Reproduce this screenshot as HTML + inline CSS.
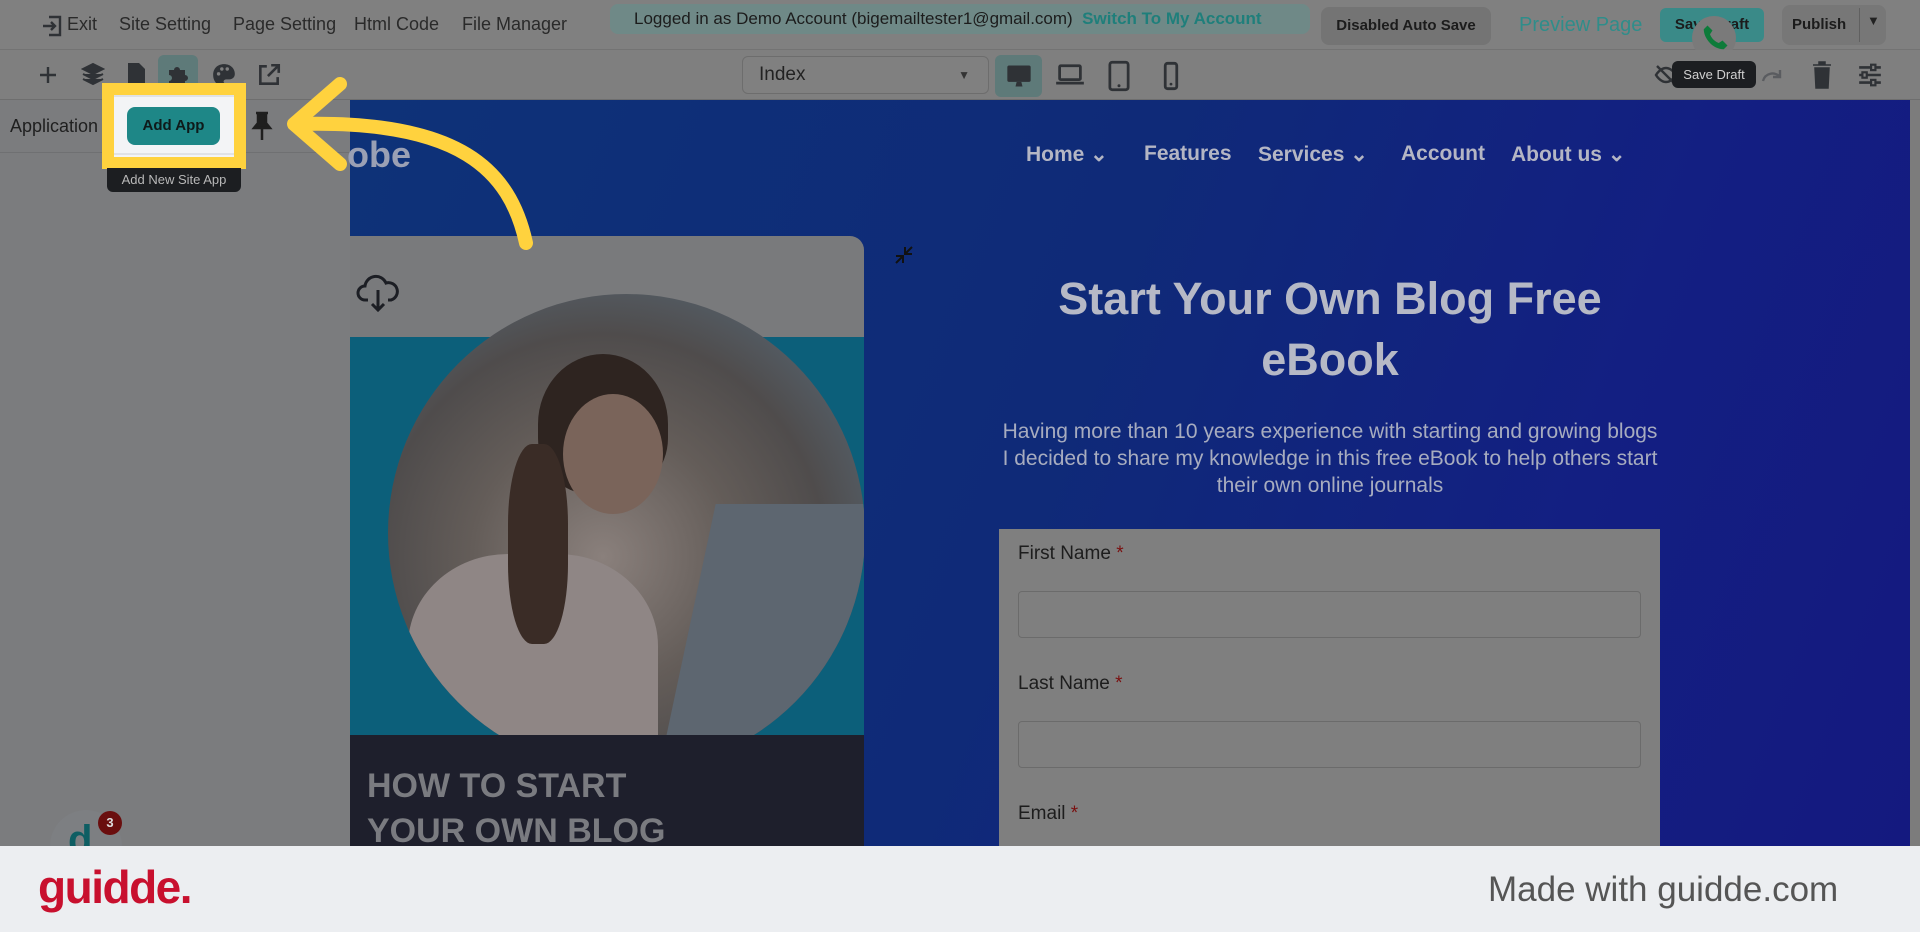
<!DOCTYPE html>
<html><head><meta charset="utf-8"><style>
*{margin:0;padding:0;box-sizing:border-box}
body{width:1920px;height:932px;overflow:hidden;background:#7f7f7f;font-family:"Liberation Sans",sans-serif;position:relative}
.a{position:absolute}
.tb{left:0;top:0;width:1920px;height:50px;background:#808080;border-bottom:1px solid #737373}
.tb2{left:0;top:50px;width:1920px;height:50px;background:#7f7f7f;border-bottom:1px solid #6e6e6e}
.t{font-size:18px;color:#2a2a2a;top:14px}
.ic{stroke:#2f3236;fill:none;stroke-width:2.4}
.nav{font-size:21px;font-weight:bold;color:#b4b6c4;top:142px}
</style></head><body>
<div class="a tb"></div>
<svg class="a" style="left:40px;top:14px" width="24" height="24" viewBox="0 0 24 24"><path d="M9 3h11v18H9M3 12h12M11 8l4 4-4 4" class="ic" stroke-width="2"/></svg>
<div class="a t" style="left:67px">Exit</div>
<div class="a t" style="left:119px">Site Setting</div>
<div class="a t" style="left:233px">Page Setting</div>
<div class="a t" style="left:354px">Html Code</div>
<div class="a t" style="left:462px">File Manager</div>
<div class="a" style="left:610px;top:4px;width:700px;height:30px;background:#6f8987;border-radius:8px;font-size:17px;line-height:30px;padding-left:24px;color:#1c1c1c">Logged in as Demo Account (bigemailtester1@gmail.com) &nbsp;<b style="color:#1f7f7b">Switch To My Account</b></div>
<div class="a" style="left:1321px;top:7px;width:170px;height:38px;background:#747474;border-radius:8px;font-size:15px;font-weight:bold;line-height:38px;text-align:center;color:#1c1c1c">Disabled Auto Save</div>
<div class="a" style="left:1519px;top:14px;font-size:20px;color:#2f8d8a">Preview Page</div>
<div class="a" style="left:1660px;top:8px;width:104px;height:34px;background:#3a8a88;border-radius:6px;font-size:15px;font-weight:bold;line-height:34px;text-align:center;color:#1c1c1c">Save Draft</div>
<div class="a" style="left:1692px;top:16px;width:44px;height:44px;border-radius:50%;background:#7a7a7a"></div>
<svg class="a" style="left:1700px;top:22px" width="30" height="32" viewBox="0 0 24 24"><path d="M6 2l4 4-2 3c1 3 4 6 7 7l3-2 4 4-3 3C10 21 3 12 3 5z" fill="#0d7b3a"/></svg>
<div class="a" style="left:1782px;top:5px;width:104px;height:40px;background:#777;border-radius:8px;font-size:15px;font-weight:bold;line-height:40px;padding-left:10px;color:#1c1c1c">Publish</div>
<div class="a" style="left:1859px;top:8px;width:1px;height:34px;background:#606060"></div>
<div class="a" style="left:1867px;top:13px;font-size:13px;color:#222">▼</div>

<div class="a tb2"></div>
<svg class="a" style="left:36px;top:63px" width="24" height="24" viewBox="0 0 24 24"><path d="M12 4v16M4 12h16" class="ic" stroke-width="2.6"/></svg>
<svg class="a" style="left:81px;top:62px" width="24" height="26" viewBox="0 0 24 26"><path d="M12 2l10 5-10 5-10-5z M2 12l10 5 10-5 M2 17l10 5 10-5" fill="#2f3236" stroke="#2f3236" stroke-width="2"/></svg>
<svg class="a" style="left:126px;top:62px" width="20" height="26" viewBox="0 0 20 26"><path d="M2 1h11l6 6v18H2z" fill="#2f3236"/></svg>
<div class="a" style="left:158px;top:55px;width:40px;height:40px;background:#5e7a79;border-radius:6px"></div>
<svg class="a" style="left:166px;top:62px" width="24" height="26" viewBox="0 0 24 24"><path d="M3 7h5a3 3 0 1 1 6 0h5v5a3 3 0 1 1 0 6v5H3v-5a3 3 0 1 0 0-6z" fill="#2f3236"/></svg>
<svg class="a" style="left:211px;top:62px" width="26" height="26" viewBox="0 0 24 24"><path d="M12 2C6 2 2 6 2 12s4 10 9 10c2 0 2-2 1-3s0-3 2-3h3c3 0 5-2 5-5 0-5-4-9-10-9z" fill="#2f3236"/><circle cx="7" cy="11" r="1.6" fill="#7f7f7f"/><circle cx="10" cy="6.5" r="1.6" fill="#7f7f7f"/><circle cx="15" cy="6.5" r="1.6" fill="#7f7f7f"/></svg>
<svg class="a" style="left:256px;top:62px" width="26" height="26" viewBox="0 0 24 24"><path d="M10 4H4v16h16v-6M14 3h7v7M21 3L11 13" class="ic"/></svg>
<div class="a" style="left:742px;top:56px;width:247px;height:38px;border:1px solid #6d6d6d;border-radius:6px;background:#808080;font-size:19px;line-height:36px;padding-left:16px;color:#222">Index<span style="position:absolute;right:18px;font-size:12px;color:#333">▼</span></div>
<div class="a" style="left:995px;top:55px;width:47px;height:42px;background:#5e7a79;border-radius:6px"></div>
<svg class="a" style="left:1005px;top:62px" width="28" height="28" viewBox="0 0 24 24"><rect x="2" y="3" width="20" height="14" rx="1.5" fill="#2f3236"/><path d="M9 21h6l-1-4h-4z" fill="#2f3236"/></svg>
<svg class="a" style="left:1055px;top:62px" width="30" height="26" viewBox="0 0 26 22"><rect x="4" y="3" width="18" height="12" rx="1" class="ic" stroke-width="2"/><path d="M1 18h24" class="ic" stroke-width="2.5"/></svg>
<svg class="a" style="left:1107px;top:60px" width="24" height="32" viewBox="0 0 20 28"><rect x="2" y="2" width="16" height="24" rx="2" class="ic" stroke-width="2.4"/><circle cx="10" cy="22.5" r="1.3" fill="#2f3236"/></svg>
<svg class="a" style="left:1162px;top:61px" width="18" height="30" viewBox="0 0 14 26"><rect x="2" y="2" width="10" height="22" rx="2" class="ic" stroke-width="2.2"/><circle cx="7" cy="20" r="1.2" fill="#2f3236"/></svg>
<svg class="a" style="left:1653px;top:63px" width="26" height="24" viewBox="0 0 24 24"><path d="M2 12s4-7 10-7 10 7 10 7-4 7-10 7S2 12 2 12z" class="ic"/><path d="M3 3l18 18" class="ic"/></svg>
<div class="a" style="left:1672px;top:61px;width:84px;height:27px;background:#1c1e21;border-radius:6px;font-size:13px;color:#d0d0d0;line-height:27px;text-align:center">Save Draft</div>
<svg class="a" style="left:1760px;top:66px" width="24" height="18" viewBox="0 0 24 18"><path d="M3 15c2-8 12-10 17-4M20 4v7h-7" stroke="#5a5c60" fill="none" stroke-width="2.4"/></svg>
<svg class="a" style="left:1812px;top:61px" width="20" height="28" viewBox="0 0 20 28"><path d="M1 4h18M7 4V1h6v3M3 7h14l-1 20H4z" fill="#2f3236" stroke="#2f3236" stroke-width="1.5"/></svg>
<svg class="a" style="left:1857px;top:62px" width="26" height="26" viewBox="0 0 24 24"><path d="M2 5h20M2 12h20M2 19h20" class="ic" stroke-width="2"/><rect x="13" y="2.5" width="4" height="5" fill="#7f7f7f" stroke="#2f3236" stroke-width="2"/><rect x="5" y="9.5" width="4" height="5" fill="#7f7f7f" stroke="#2f3236" stroke-width="2"/><rect x="13" y="16.5" width="4" height="5" fill="#7f7f7f" stroke="#2f3236" stroke-width="2"/></svg>

<div class="a" style="left:0;top:100px;width:350px;height:746px;background:#7b7c7e"></div>
<div class="a" style="left:0;top:152px;width:350px;height:1px;background:#6f7072"></div>
<div class="a" style="left:10px;top:116px;font-size:18px;color:#1f1f1f">Application</div>
<div class="a" style="left:102px;top:83px;width:144px;height:86px;border:12px solid #ffd23e;background:#f3f4f6"></div>
<div class="a" style="left:114px;top:95px;width:120px;height:2px;background:#e0e2e6"></div>
<div class="a" style="left:114px;top:153px;width:120px;height:2px;background:#e0e2e6"></div>
<div class="a" style="left:127px;top:107px;width:93px;height:38px;background:#1e8787;border-radius:8px;font-size:15px;font-weight:bold;line-height:38px;text-align:center;color:#0e1a1a">Add App</div>
<svg class="a" style="left:251px;top:111px" width="22" height="30" viewBox="0 0 22 30"><path d="M5 2h12M7 2v10l-4 5h16l-4-5V2M11 17v12" stroke="#1f1f1f" fill="#1f1f1f" stroke-width="2.5"/></svg>
<div class="a" style="left:107px;top:168px;width:134px;height:24px;background:#1c1e21;border-radius:0 0 6px 6px;font-size:13px;color:#b8b8b8;line-height:24px;text-align:center">Add New Site App</div>

<div class="a" style="left:350px;top:100px;width:1560px;height:746px;background:linear-gradient(110deg,#0e3278 0%,#0f2a78 45%,#131f82 75%,#14197f 100%)"></div>
<div class="a" style="left:1910px;top:100px;width:10px;height:746px;background:#7c7c7c"></div>
<div class="a" style="left:347px;top:134px;font-size:36px;font-weight:bold;color:#9aa0b4">obe</div>
<div class="a nav" style="left:1026px">Home ⌄</div>
<div class="a nav" style="left:1144px">Features</div>
<div class="a nav" style="left:1258px">Services ⌄</div>
<div class="a nav" style="left:1401px">Account</div>
<div class="a nav" style="left:1511px">About us ⌄</div>

<div class="a" style="left:350px;top:236px;width:514px;height:610px;border-radius:0 14px 0 0;overflow:hidden;background:#797a7c">
 <div class="a" style="left:0;top:101px;width:514px;height:400px;background:#0c5f7a"></div>
 <div class="a" style="left:38px;top:58px;width:477px;height:478px;border-radius:50%;background:radial-gradient(circle at 45% 55%,#8a807c 0%,#645d59 35%,#4f4c4c 60%,#55606a 80%);overflow:hidden">
   <div class="a" style="left:20px;top:260px;width:250px;height:230px;background:#8f8685;border-radius:40% 40% 0 0"></div>
   <div class="a" style="left:300px;top:210px;width:190px;height:260px;background:#5d6670;transform:skewX(-12deg)"></div>
   <div class="a" style="left:150px;top:60px;width:130px;height:140px;background:#2e2420;border-radius:50% 50% 40% 40%"></div>
   <div class="a" style="left:175px;top:100px;width:100px;height:120px;background:#7a645a;border-radius:50%"></div>
   <div class="a" style="left:120px;top:150px;width:60px;height:200px;background:#3a2c26;border-radius:40%"></div>
 </div>
 <div class="a" style="left:0;top:499px;width:514px;height:111px;background:#1e1f2c"></div>
 <div class="a" style="left:17px;top:528px;font-size:34px;font-weight:900;color:#7a7b80;line-height:45px">HOW TO START<br>YOUR OWN BLOG</div>
 <svg class="a" style="left:6px;top:36px" width="46" height="42" viewBox="0 0 46 42"><path d="M12 28H9a7 7 0 0 1 0-14 11 11 0 0 1 21-3 8 8 0 0 1 5 17h-3M22 18v20M16 32l6 6 6-6" stroke="#1c1e24" fill="none" stroke-width="3"/></svg>
</div>
<svg class="a" style="left:893px;top:244px" width="22" height="22" viewBox="0 0 22 22"><path d="M3 19l7-7M12 3v7h7M19 3l-7 7M3 12h7v7" stroke="#111" fill="none" stroke-width="2"/></svg>

<div class="a" style="left:930px;top:268px;width:800px;text-align:center;font-size:45px;font-weight:bold;color:#b6b9c6;line-height:61px">Start Your Own Blog Free<br>eBook</div>
<div class="a" style="left:930px;top:418px;width:800px;text-align:center;font-size:21px;color:#a7acbf;line-height:27px;white-space:nowrap">Having more than 10 years experience with starting and growing blogs<br>I decided to share my knowledge in this free eBook to help others start<br>their own online journals</div>
<div class="a" style="left:999px;top:529px;width:661px;height:317px;background:#7f7f7f">
 <div class="a" style="left:19px;top:14px;font-size:19px;color:#1d1d1d">First Name <span style="color:#7a1010">*</span></div>
 <div class="a" style="left:19px;top:62px;width:623px;height:47px;border:1px solid #6b6b6b;border-radius:4px"></div>
 <div class="a" style="left:19px;top:144px;font-size:19px;color:#1d1d1d">Last Name <span style="color:#7a1010">*</span></div>
 <div class="a" style="left:19px;top:192px;width:623px;height:47px;border:1px solid #6b6b6b;border-radius:4px"></div>
 <div class="a" style="left:19px;top:274px;font-size:19px;color:#1d1d1d">Email <span style="color:#7a1010">*</span></div>
</div>

<svg class="a" style="left:0;top:0" width="700" height="300" viewBox="0 0 700 300"><path d="M526 243C510 170 460 120 300 124" stroke="#ffd23e" stroke-width="14" fill="none" stroke-linecap="round"/><path d="M340 84L294 124L340 164" stroke="#ffd23e" stroke-width="14" fill="none" stroke-linecap="round" stroke-linejoin="round"/></svg>

<div class="a" style="left:50px;top:810px;width:72px;height:72px;border-radius:50%;background:#7d7f82"></div>
<div class="a" style="left:68px;top:818px;font-size:40px;font-weight:bold;color:#0e5e63">d</div>
<div class="a" style="left:98px;top:811px;width:24px;height:24px;border-radius:50%;background:#6a0e0e;color:#ddd;font-size:13px;text-align:center;line-height:24px;font-weight:bold">3</div>

<div class="a" style="left:0;top:846px;width:1920px;height:86px;background:#eceef1"></div>
<div class="a" style="left:38px;top:860px;font-size:46px;font-weight:bold;color:#c8102e;letter-spacing:-1.5px">guidde.</div>
<div class="a" style="left:1488px;top:870px;font-size:35px;color:#555">Made with guidde.com</div>
</body></html>
